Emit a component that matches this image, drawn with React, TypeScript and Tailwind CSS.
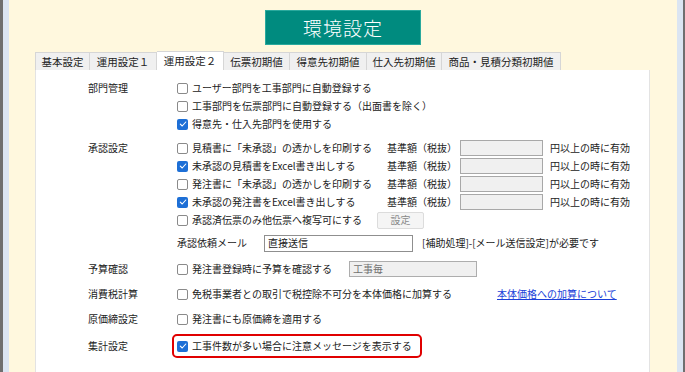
import React from "react";

function Box({ checked }: { checked?: boolean }) {
  if (checked) {
    return (
      <span className="flex h-[11px] w-[11px] shrink-0 items-center justify-center rounded-[2px] bg-[#1d6fd6]">
        <svg width="8" height="8" viewBox="0 0 8 8" fill="none">
          <path d="M1.3 4.2 L3.2 6 L6.8 2" stroke="#ffffff" strokeWidth="1.1" strokeLinecap="round" strokeLinejoin="round" />
        </svg>
      </span>
    );
  }
  return <span className="block h-[11px] w-[11px] shrink-0 rounded-[2px] border border-[#8a8a8a] bg-white" />;
}

function Check({ checked, children, className = "" }: { checked?: boolean; children: React.ReactNode; className?: string }) {
  return (
    <div className={`flex items-center ${className}`}>
      <Box checked={checked} />
      <span className="ml-[4px] whitespace-nowrap">{children}</span>
    </div>
  );
}

function Row({ label, children, className = "" }: { label?: string; children?: React.ReactNode; className?: string }) {
  return (
    <div className={`flex h-[18px] items-center ${className}`}>
      <div className="w-[89px] shrink-0 whitespace-nowrap">{label}</div>
      {children}
    </div>
  );
}

function Threshold() {
  return (
    <>
      <span className="w-[73px] shrink-0 whitespace-nowrap">基準額（税抜）</span>
      <div className="h-[16px] w-[83px] shrink-0 border border-[#a8a8a8] bg-[#f0f0f0]" />
      <span className="ml-[7px] whitespace-nowrap">円以上の時に有効</span>
    </>
  );
}

const tabs = [
  { t: "基本設定", w: "w-[55px]" },
  { t: "運用設定１", w: "w-[67px]" },
  { t: "運用設定２", w: "w-[67px]", active: true },
  { t: "伝票初期値", w: "w-[66px]" },
  { t: "得意先初期値", w: "w-[77px]" },
  { t: "仕入先初期値", w: "w-[75px]" },
  { t: "商品・見積分類初期値", w: "w-[119px]" },
];

export default function App() {
  return (
    <div className="flex h-[372px] w-[685px] overflow-hidden font-['Noto_Sans_CJK_JP','Noto_Sans',sans-serif] text-[10px] leading-[14px] text-[#222222]">
      <div className="w-[3px] bg-[#6f6f6f]" />
      <div className="w-[6px] bg-[#dbe5f2]" />
      <div className="flex flex-1 flex-col bg-[#fff8de]">
        <div className="mx-auto mt-[10px] flex h-[35px] w-[156px] items-center justify-center border border-[#2aa99d] bg-[#008b7f] text-[19px] font-light tracking-[1px] text-white">
          環境設定
        </div>
        <div className="ml-[26px] mt-[6px] flex h-[19px] items-end">
          {tabs.map((tab, i) => (
            <div
              key={tab.t}
              className={`${tab.w} flex shrink-0 items-center justify-center whitespace-nowrap border-t border-r border-[#d6d6d6] text-[10.5px] ${
                i === 0 ? "border-l" : ""
              } ${tab.active ? "h-[19px] bg-white" : "h-[18px] bg-[#f0f0f0]"}`}
            >
              {tab.t}
            </div>
          ))}
        </div>
        <div className="ml-[26px] mr-[27px] flex flex-1 flex-col border-x border-[#e3e3e3] bg-white pl-[52px] pt-[9px]">
          <Row label="部門管理">
            <Check>ユーザー部門を工事部門に自動登録する</Check>
          </Row>
          <Row>
            <Check>工事部門を伝票部門に自動登録する（出面書を除く）</Check>
          </Row>
          <Row>
            <Check checked>得意先・仕入先部門を使用する</Check>
          </Row>

          <Row label="承認設定" className="mt-[6px]">
            <Check className="w-[210px] shrink-0">見積書に「未承認」の透かしを印刷する</Check>
            <Threshold />
          </Row>
          <Row>
            <Check checked className="w-[210px] shrink-0">未承認の見積書をExcel書き出しする</Check>
            <Threshold />
          </Row>
          <Row>
            <Check className="w-[210px] shrink-0">発注書に「未承認」の透かしを印刷する</Check>
            <Threshold />
          </Row>
          <Row>
            <Check checked className="w-[210px] shrink-0">未承認の発注書をExcel書き出しする</Check>
            <Threshold />
          </Row>
          <Row>
            <Check className="w-[200px] shrink-0">承認済伝票のみ他伝票へ複写可にする</Check>
            <div className="flex h-[17px] w-[47px] items-center justify-center rounded-[2px] border border-[#dcdcdc] bg-[#f5f5f5] text-[#8a8a8a]">
              設定
            </div>
          </Row>

          <Row className="mt-[5px]">
            <span className="w-[87px] shrink-0 whitespace-nowrap">承認依頼メール</span>
            <div className="flex h-[17px] w-[149px] shrink-0 items-center border border-[#8f8f8f] pl-[3px]">直接送信</div>
            <span className="ml-[9px] whitespace-nowrap">[補助処理]-[メール送信設定]が必要です</span>
          </Row>

          <Row label="予算確認" className="mt-[8px]">
            <Check className="w-[172px] shrink-0">発注書登録時に予算を確認する</Check>
            <div className="flex h-[16px] w-[128px] items-center border border-[#adadad] bg-[#f0f0f0] pl-[3px] text-[#707070]">
              工事毎
            </div>
          </Row>

          <Row label="消費税計算" className="mt-[7px]">
            <Check className="w-[320px] shrink-0">免税事業者との取引で税控除不可分を本体価格に加算する</Check>
            <span className="whitespace-nowrap text-[#1c3fd9] underline">本体価格への加算について</span>
          </Row>

          <Row label="原価締設定" className="mt-[7px]">
            <Check>発注書にも原価締を適用する</Check>
          </Row>

          <div className="mt-[6px] flex h-[24px] items-center">
            <div className="w-[84px] shrink-0 whitespace-nowrap">集計設定</div>
            <div className="flex h-[24px] w-[250px] items-center rounded-[5px] border-2 border-[#e00000] pl-[3px]">
              <Check checked>工事件数が多い場合に注意メッセージを表示する</Check>
            </div>
          </div>
        </div>
      </div>
      <div className="w-[6px] bg-[#dbe5f2]" />
      <div className="w-[2px] bg-[#6f6f6f]" />
    </div>
  );
}
